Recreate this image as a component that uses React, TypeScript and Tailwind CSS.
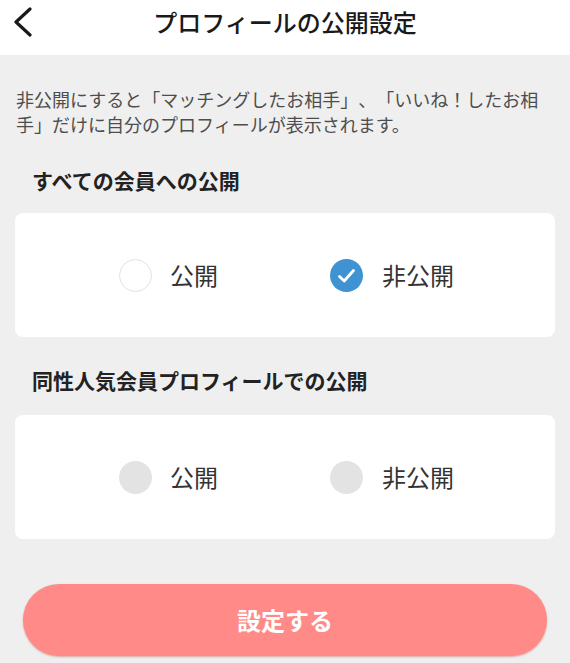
import { useState } from "react";

type Choice = "public" | "private";

function Radio({ checked, disabled }: { checked: boolean; disabled?: boolean }) {
  if (disabled) {
    return <span className="h-[33px] w-[33px] shrink-0 rounded-full bg-[#e3e3e3]" />;
  }
  if (checked) {
    return (
      <span className="flex h-[33px] w-[33px] shrink-0 items-center justify-center rounded-full bg-[#3f93d3]">
        <svg width="33" height="33" viewBox="0 0 33 33" fill="none">
          <path d="M9.5 17.5 L14.2 22 L23.5 11.5" stroke="white" strokeWidth="2.8" strokeLinecap="round" strokeLinejoin="round" />
        </svg>
      </span>
    );
  }
  return <span className="h-[33px] w-[33px] shrink-0 rounded-full border-[1.5px] border-[#e2e2e2] bg-white" />;
}

function OptionCard({
  value,
  onChange,
  disabled,
}: {
  value: Choice | null;
  onChange?: (v: Choice) => void;
  disabled?: boolean;
}) {
  return (
    <div className="mx-[15px] flex h-[124px] items-center rounded-lg bg-white">
      <button
        type="button"
        onClick={() => onChange?.("public")}
        className="ml-[104px] flex items-center gap-[18px]"
      >
        <Radio checked={value === "public"} disabled={disabled} />
        <span className="text-[24px] leading-none text-[#333]">公開</span>
      </button>
      <button
        type="button"
        onClick={() => onChange?.("private")}
        className="ml-[112px] flex items-center gap-[19px]"
      >
        <Radio checked={value === "private"} disabled={disabled} />
        <span className="text-[24px] leading-none text-[#333]">非公開</span>
      </button>
    </div>
  );
}

export default function App() {
  const [all, setAll] = useState<Choice>("private");

  return (
    <div
      className="flex min-h-[663px] w-full flex-col bg-[#efefef] [text-spacing-trim:space-all]"
      style={{ fontFamily: '"Noto Sans CJK JP", "Noto Sans", sans-serif' }}
    >
      {/* Header */}
      <header className="relative flex h-[55px] shrink-0 items-center justify-center bg-white">
        <button type="button" className="absolute left-[11px] top-[7px]">
          <svg width="24" height="30" viewBox="0 0 24 30" fill="none">
            <path d="M19 2 L5 15 L19 28" stroke="#1a1a1a" strokeWidth="3.2" strokeLinecap="round" strokeLinejoin="round" />
          </svg>
        </button>
        <h1 className="-mt-[12px] text-[24px] font-medium text-[#1a1a1a]">プロフィールの公開設定</h1>
      </header>

      <p className="mt-[32px] px-[16px] text-[18px] leading-[25px] text-[#4d4d4d]">
        非公開にすると「マッチングしたお相手」、「いいね！したお相手」だけに自分のプロフィールが表示されます。
      </p>

      <h2 className="mt-[28px] mb-[18px] px-[32px] text-[21px] leading-[30px] font-bold text-[#222]">
        すべての会員への公開
      </h2>
      <OptionCard value={all} onChange={setAll} />

      <h2 className="mt-[28px] mb-[20px] px-[32px] text-[21px] leading-[30px] font-bold text-[#222]">
        同性人気会員プロフィールでの公開
      </h2>
      <OptionCard value={null} disabled />

      <button
        type="button"
        className="mx-[23px] mt-[45px] flex h-[72px] items-center justify-center rounded-full bg-[#ff8a88] text-[24px] font-bold text-white shadow-[0_1px_2px_rgba(200,90,90,0.5)]"
      >
        設定する
      </button>
    </div>
  );
}
